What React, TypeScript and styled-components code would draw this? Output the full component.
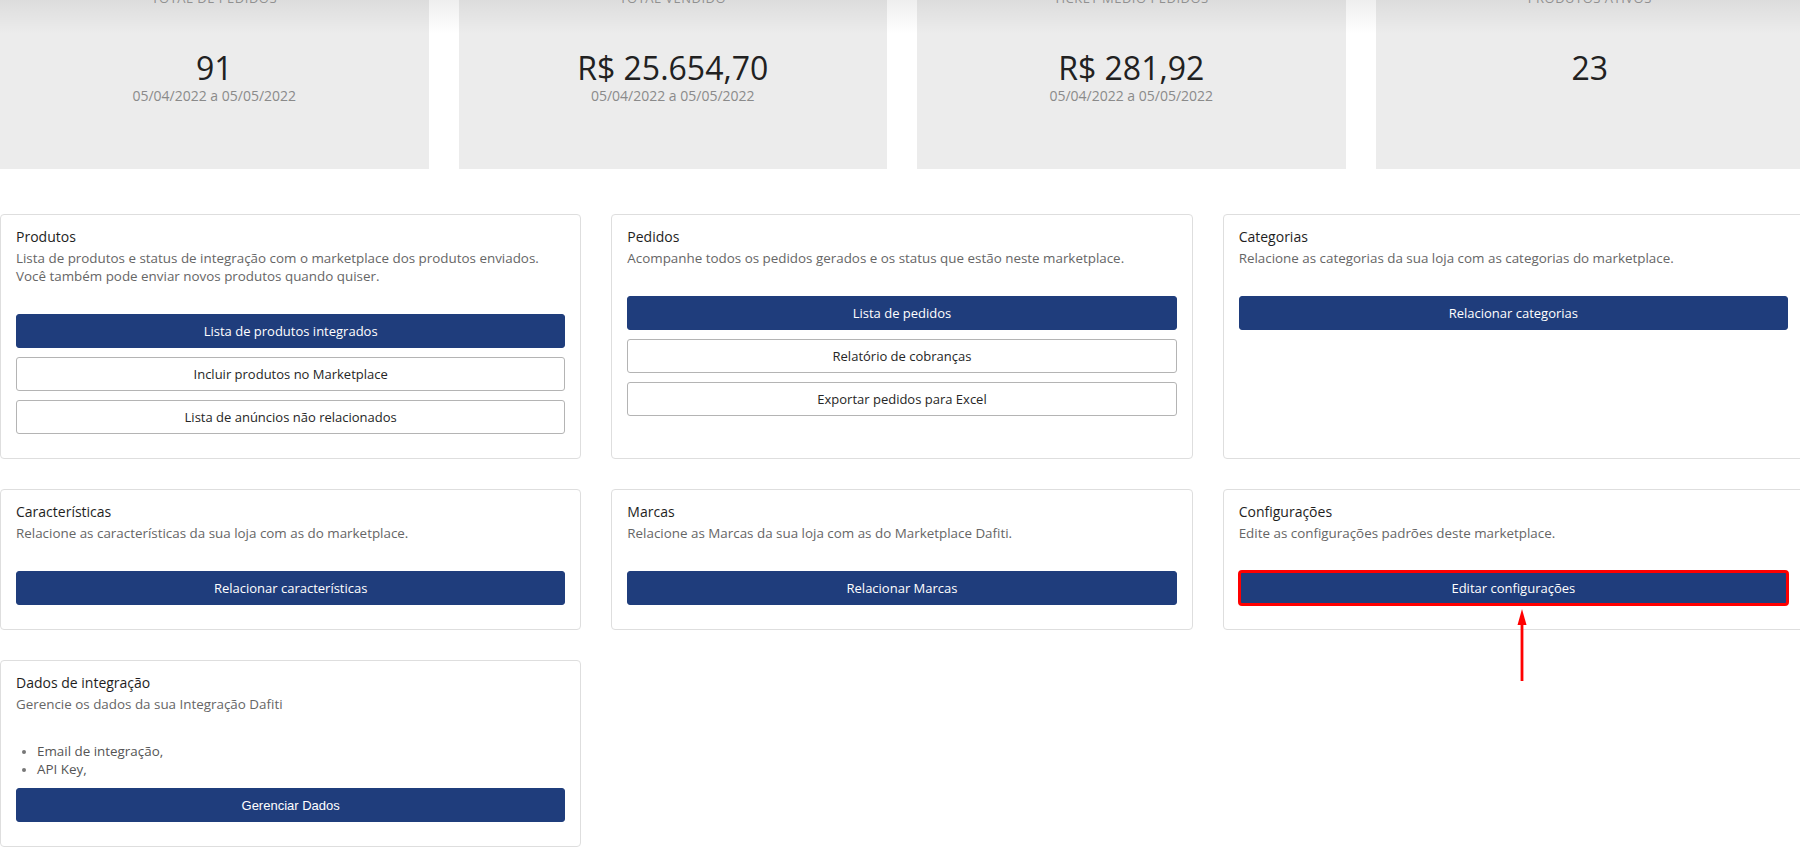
import React from 'react';
import styled, { createGlobalStyle } from 'styled-components';

const GlobalStyle = createGlobalStyle`
  html, body {
    margin: 0;
    padding: 0;
    background: #fff;
    overflow: hidden;
  }
  body {
    font-family: 'Open Sans', 'Liberation Sans', sans-serif;
    color: #222;
  }
  * {
    box-sizing: border-box;
  }
`;

const Page = styled.div`
  width: 1804px;
  display: flex;
  flex-direction: column;
`;

const StatsRow = styled.div`
  position: relative;
  display: grid;
  grid-template-columns: repeat(4, 1fr);
  gap: 30px;
  margin-top: -21px;

  &::after {
    content: '';
    position: absolute;
    top: 21px;
    left: 0;
    right: 0;
    height: 34px;
    background: linear-gradient(rgba(0, 0, 0, 0.065), rgba(0, 0, 0, 0));
    pointer-events: none;
  }
`;

const StatCard = styled.div`
  height: 190px;
  background: #ececec;
  padding-top: 10px;
  display: flex;
  flex-direction: column;
  align-items: center;
`;

const StatLabel = styled.div`
  font-size: 13px;
  line-height: 18px;
  letter-spacing: 0.5px;
  text-transform: uppercase;
  color: #9a9a9a;
`;

const StatValue = styled.div`
  margin-top: 43px;
  font-size: 32px;
  line-height: 36px;
  color: #212121;
`;

const StatPeriod = styled.div`
  font-size: 14px;
  line-height: 20px;
  color: #8a8a8a;
`;

const CardGrid = styled.div`
  display: grid;
  grid-template-columns: repeat(3, 1fr);
  gap: 30px;
  margin-top: 45px;
`;

const Card = styled.div`
  border: 1px solid #dedede;
  border-radius: 4px;
  padding: 12px 15px 24px;
  display: flex;
  flex-direction: column;
`;

const CardTitle = styled.h4`
  margin: 0 0 2px;
  font-size: 14px;
  line-height: 20px;
  font-weight: 400;
  color: #1e1e1e;
`;

const CardText = styled.p`
  margin: 0;
  font-size: 13.4px;
  line-height: 18px;
  color: #666;
`;

const Actions = styled.div<{ $gap?: number }>`
  position: relative;
  display: flex;
  flex-direction: column;
  gap: 9px;
  margin-top: ${(p) => p.$gap ?? 29}px;
`;

const Button = styled.button<{ $variant?: 'primary' | 'outline'; $highlight?: boolean; $arial?: boolean }>`
  height: 34px;
  width: 100%;
  border-radius: 3px;
  font-family: ${(p) => (p.$arial ? "'Liberation Sans', Arial, sans-serif" : "'Open Sans', sans-serif")};
  font-size: 13px;
  cursor: pointer;
  background: ${(p) => (p.$variant === 'outline' ? '#fff' : '#1f3d7c')};
  color: ${(p) => (p.$variant === 'outline' ? '#262626' : '#fff')};
  border: 1px solid ${(p) => (p.$variant === 'outline' ? '#b4b4b4' : '#1f3d7c')};
  outline: ${(p) => (p.$highlight ? '3px solid #ff0000' : 'none')};
  outline-offset: -2px;
`;

const Pointer = styled.svg`
  position: absolute;
  left: calc(50% + 4px);
  top: 38px;
  width: 10px;
  height: 72px;
`;

const InfoList = styled.ul`
  margin: 29px 0 10px;
  padding-left: 21px;
  font-size: 13.4px;
  line-height: 18px;
  color: #555;

  li::marker {
    color: #777;
    font-size: 11px;
  }
`;

const stats = [
  { label: 'Total de pedidos', value: '91', period: '05/04/2022 a 05/05/2022' },
  { label: 'Total vendido', value: 'R$ 25.654,70', period: '05/04/2022 a 05/05/2022' },
  { label: 'Ticket médio pedidos', value: 'R$ 281,92', period: '05/04/2022 a 05/05/2022' },
  { label: 'Produtos ativos', value: '23', period: '' },
];

export default function App() {
  return (
    <>
      <GlobalStyle />
      <Page>
        <StatsRow>
          {stats.map((s) => (
            <StatCard key={s.label}>
              <StatLabel>{s.label}</StatLabel>
              <StatValue>{s.value}</StatValue>
              {s.period && <StatPeriod>{s.period}</StatPeriod>}
            </StatCard>
          ))}
        </StatsRow>

        <CardGrid>
          <Card>
            <CardTitle>Produtos</CardTitle>
            <CardText>
              Lista de produtos e status de integração com o marketplace dos produtos enviados.
              <br />
              Você também pode enviar novos produtos quando quiser.
            </CardText>
            <Actions>
              <Button>Lista de produtos integrados</Button>
              <Button $variant="outline">Incluir produtos no Marketplace</Button>
              <Button $variant="outline">Lista de anúncios não relacionados</Button>
            </Actions>
          </Card>

          <Card>
            <CardTitle>Pedidos</CardTitle>
            <CardText>Acompanhe todos os pedidos gerados e os status que estão neste marketplace.</CardText>
            <Actions>
              <Button>Lista de pedidos</Button>
              <Button $variant="outline">Relatório de cobranças</Button>
              <Button $variant="outline">Exportar pedidos para Excel</Button>
            </Actions>
          </Card>

          <Card>
            <CardTitle>Categorias</CardTitle>
            <CardText>Relacione as categorias da sua loja com as categorias do marketplace.</CardText>
            <Actions>
              <Button>Relacionar categorias</Button>
            </Actions>
          </Card>

          <Card>
            <CardTitle>Características</CardTitle>
            <CardText>Relacione as características da sua loja com as do marketplace.</CardText>
            <Actions>
              <Button>Relacionar características</Button>
            </Actions>
          </Card>

          <Card>
            <CardTitle>Marcas</CardTitle>
            <CardText>Relacione as Marcas da sua loja com as do Marketplace Dafiti.</CardText>
            <Actions>
              <Button>Relacionar Marcas</Button>
            </Actions>
          </Card>

          <Card>
            <CardTitle>Configurações</CardTitle>
            <CardText>Edite as configurações padrões deste marketplace.</CardText>
            <Actions>
              <Button $highlight>Editar configurações</Button>
              <Pointer viewBox="0 0 10 72">
                <polygon points="5,0 0.5,16 9.5,16" fill="#ff0000" />
                <rect x="3.6" y="12" width="2.8" height="60" fill="#ff0000" />
              </Pointer>
            </Actions>
          </Card>

          <Card>
            <CardTitle>Dados de integração</CardTitle>
            <CardText>Gerencie os dados da sua Integração Dafiti</CardText>
            <InfoList>
              <li>Email de integração,</li>
              <li>API Key,</li>
            </InfoList>
            <Actions $gap={0}>
              <Button $arial>Gerenciar Dados</Button>
            </Actions>
          </Card>
        </CardGrid>
      </Page>
    </>
  );
}
